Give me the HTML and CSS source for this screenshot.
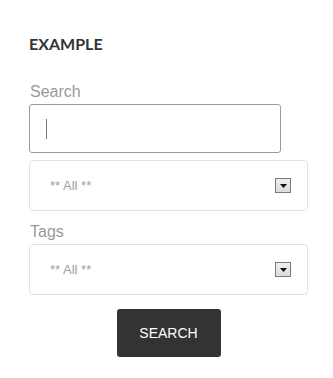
FILE: index.html
```html
<!DOCTYPE html>
<html>
<head>
<meta charset="utf-8">
<link rel="stylesheet" href="styles.css">
</head>
<body>
<div class="widget">
  <h2 class="title">EXAMPLE</h2>
  <form class="form">
    <label class="label">Search</label>
    <div class="input"><span class="caret"></span></div>
    <div class="select first">
      <span class="value">** All **</span>
      <span class="arrow"><svg width="7" height="4" viewBox="0 0 7 4"><path d="M0 0H7L3.5 4Z" fill="#111"/></svg></span>
    </div>
    <label class="label tags">Tags</label>
    <div class="select">
      <span class="value">** All **</span>
      <span class="arrow"><svg width="7" height="4" viewBox="0 0 7 4"><path d="M0 0H7L3.5 4Z" fill="#111"/></svg></span>
    </div>
    <div class="actions"><button type="button" class="btn">SEARCH</button></div>
  </form>
</div>
</body>
</html>
```
FILE: styles.css
```css
html, body { margin: 0; padding: 0; background: #fff; }
body { font-family: "Liberation Sans", Arial, sans-serif; }
.widget { width: 279px; padding: 34px 0 0 29px; }
.title {
  margin: 0;
  font-family: Lato, "Liberation Sans", sans-serif;
  font-weight: 700;
  font-size: 16px;
  line-height: 20px;
  color: #333;
  letter-spacing: 0;
}
.form { display: flex; flex-direction: column; margin-top: 28.5px; }
.label {
  font-size: 16px;
  line-height: 18px;
  color: #999;
  margin-bottom: 3.5px;
  padding-left: 1px;
}
.tags { margin-top: 11.5px; }
.input {
  box-sizing: border-box;
  width: 252px;
  height: 49px;
  border: 1px solid #9a9a9a;
  border-radius: 3px;
  display: flex;
  align-items: center;
  padding-left: 16px;
}
.caret { display: block; width: 1px; height: 20px; background: #777; }
.select {
  box-sizing: border-box;
  width: 279px;
  height: 51px;
  border: 1px solid #e2e2e2;
  border-radius: 4px;
  display: flex;
  align-items: center;
  justify-content: space-between;
  padding: 0 16px 0 20px;
}
.first { margin-top: 7px; }
.value { font-size: 13px; color: #a0a0a0; }
.arrow {
  box-sizing: border-box;
  width: 16px;
  height: 15px;
  border: 1px solid #7a7a7a;
  background: linear-gradient(#f0f0f0, #dcdcdc);
  display: flex;
  align-items: center;
  justify-content: center;
}
.arrow svg { display: block; }
.actions { display: flex; justify-content: center; margin-top: 14px; }
.btn {
  width: 104px;
  height: 48px;
  border: 0;
  border-radius: 3px;
  background: #333;
  color: #fff;
  font-family: "Liberation Sans", Arial, sans-serif;
  font-size: 14px;
  padding: 0;
}
```
